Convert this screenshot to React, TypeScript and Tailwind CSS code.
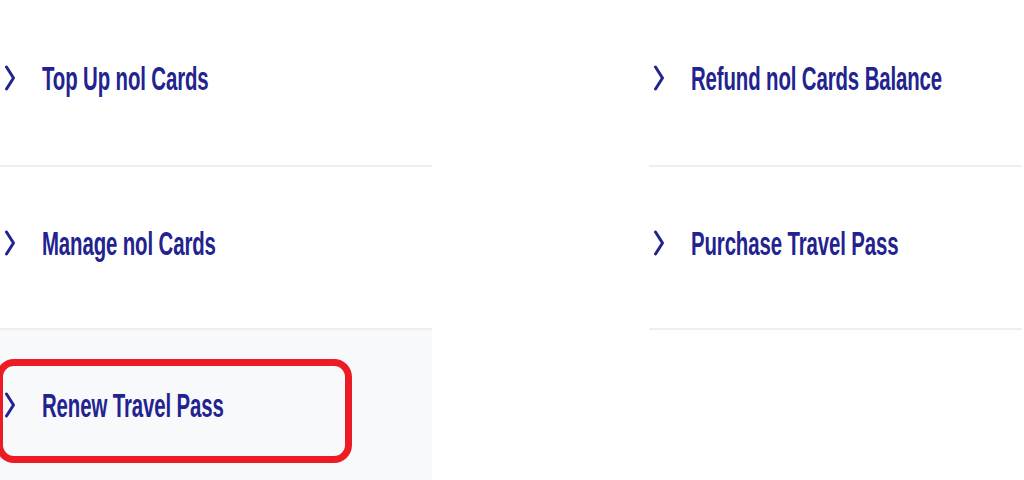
import React from 'react';

const ChevronIcon = () => (
    <svg width="12" height="26" viewBox="0 0 12 26" fill="none" className="shrink-0">
        <path d="M2.5 2 L9.5 13 L2.5 24" stroke="#22238f" strokeWidth="3" strokeLinecap="round" strokeLinejoin="round" />
    </svg>
);

interface ServiceRowProps {
    label: string;
    heightClass: string;
    divider?: boolean;
    highlighted?: boolean;
}

const ServiceRow = ({ label, heightClass, divider = true, highlighted = false }: ServiceRowProps) => (
    <div
        className={`relative flex items-center pl-[4px] ${heightClass} ${divider ? 'border-b-2 border-[#eeeeee] pb-[10px]' : ''} ${highlighted ? 'bg-[#f8f9fa]' : ''}`}
    >
        <ChevronIcon />
        <span className="ml-[26px] origin-left scale-x-[0.6] whitespace-nowrap text-[34px] font-bold leading-none tracking-[-0.2px] text-[#22238f] [font-family:'Liberation_Sans',Arial,sans-serif]">
            {label}
        </span>
        {highlighted && (
            <div className="pointer-events-none absolute left-[-4px] top-[29px] h-[104px] w-[356px] rounded-[18px] border-[7px] border-[#ed1c24]" />
        )}
    </div>
);

export default function App() {
    return (
        <div className="flex h-[480px] w-[1024px] overflow-hidden bg-white">
            <div className="w-[432px] shrink-0">
                <ServiceRow label="Top Up nol Cards" heightClass="h-[167px]" />
                <ServiceRow label="Manage nol Cards" heightClass="h-[163px]" />
                <ServiceRow label="Renew Travel Pass" heightClass="h-[150px]" divider={false} highlighted />
            </div>
            <div className="ml-[217px] w-[373px] shrink-0">
                <ServiceRow label="Refund nol Cards Balance" heightClass="h-[167px]" />
                <ServiceRow label="Purchase Travel Pass" heightClass="h-[163px]" />
            </div>
        </div>
    );
}
